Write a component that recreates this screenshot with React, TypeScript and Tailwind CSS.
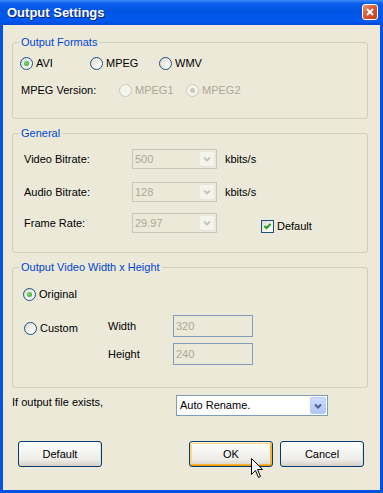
import React from "react";

function Radio({ checked, disabled, label }: { checked?: boolean; disabled?: boolean; label: string }) {
  return (
    <div className="flex items-center gap-[3px]">
      <span
        className={`flex h-[13px] w-[13px] items-center justify-center rounded-full border ${
          disabled
            ? "border-[#CAC8BB] bg-[#F5F4EA]"
            : "border-[#1C5180] bg-[linear-gradient(135deg,#DCD9CD_0%,#F4F3EE_60%,#FFFFFF_100%)]"
        }`}
      >
        {checked && (
          <span
            className={`h-[5px] w-[5px] rounded-full ${
              disabled ? "bg-[#CAC8BB]" : "bg-[radial-gradient(circle_at_40%_40%,#7EDC7E,#21A121)]"
            }`}
          />
        )}
      </span>
      <span className={disabled ? "text-[#ACA899]" : "text-black"}>{label}</span>
    </div>
  );
}

function Arrow({ color }: { color: string }) {
  return (
    <svg width="8" height="6" viewBox="0 0 8 6">
      <path d="M1 1.5 L4 4.5 L7 1.5" fill="none" stroke={color} strokeWidth="2" />
    </svg>
  );
}

// disabled combo box used in the General group
function DisabledCombo({ value }: { value: string }) {
  return (
    <div className="flex h-[20px] w-[85px] items-center border border-[#C9C7BA] bg-[#ECE9D8]">
      <span className="flex-1 pl-[2px] text-[#ACA899]">{value}</span>
      <span className="mr-[1px] flex h-[16px] w-[16px] items-center justify-center rounded-[2px] border border-[#E8E6DD] bg-[#F4F3EE]">
        <Arrow color="#C9C7BA" />
      </span>
    </div>
  );
}

function Group({ title, className, children }: { title: string; className: string; children: React.ReactNode }) {
  return (
    <div className={`ml-[9px] mr-[12px] rounded-[3px] border border-[#D0D0BF] ${className}`}>
      <div className="-mt-[8px] ml-[6px] w-fit bg-[#ECE9D8] px-[2px] leading-[14px] text-[#0046D5]">{title}</div>
      {children}
    </div>
  );
}

function XpButton({ label, focused }: { label: string; focused?: boolean }) {
  return (
    <button
      type="button"
      className={`flex h-[26px] w-[84px] items-center justify-center rounded-[3px] border border-[#003C74] bg-[linear-gradient(180deg,#FFFFFF_0%,#F6F6F3_35%,#ECEBE6_75%,#D6D0C5_100%)] text-black ${
        focused
          ? "shadow-[inset_0_1px_0_#FFF0CF,inset_0_-1px_0_#E59700,inset_1px_0_0_#FBD88C,inset_-1px_0_0_#F8B330,inset_0_2px_0_#F9D68C,inset_0_-2px_0_#F8B330,inset_2px_0_0_#FBD88C,inset_-2px_0_0_#F8B330]"
          : "shadow-[inset_0_-1px_0_#D6D0C5,inset_-1px_0_0_#E3E0D8]"
      }`}
    >
      {label}
    </button>
  );
}

export default function App() {
  return (
    <div className="relative flex h-[493px] w-[383px] flex-col overflow-hidden bg-[#0553E2] font-['Liberation_Sans',Arial,sans-serif] text-[11px] leading-[13px] text-black">
      {/* TITLE BAR */}
      <div className="flex h-[25px] items-center justify-between bg-[linear-gradient(180deg,#3D8DFB_0%,#0A5EEA_14%,#0055E5_45%,#0158EE_85%,#0149D8_100%)] pl-[7px] pr-[5px]">
        <span className="pb-[1px] text-[13px] font-bold text-white [text-shadow:1px_1px_0_#0A1E80]">Output Settings</span>
        <span className="mb-[2px] flex h-[16px] w-[16px] items-center justify-center rounded-[3px] border border-white bg-[linear-gradient(135deg,#EB9A7E_0%,#D85A36_45%,#C2401C_100%)]">
          <svg width="8" height="8" viewBox="0 0 8 8">
            <path d="M1 1 L7 7 M7 1 L1 7" stroke="white" strokeWidth="2" />
          </svg>
        </span>
      </div>

      {/* BODY */}
      <div className="mx-[3px] mb-[3px] flex flex-1 flex-col bg-[#ECE9D8]">
        {/* OUTPUT FORMATS */}
        <Group title="Output Formats" className="mt-[17px] h-[77px]">
          <div className="mt-[8px] flex h-[13px] items-center pl-[7px]">
            <div className="w-[70px]">
              <Radio checked label="AVI" />
            </div>
            <div className="w-[69px]">
              <Radio label="MPEG" />
            </div>
            <Radio label="WMV" />
          </div>
          <div className="mt-[14px] flex h-[13px] items-center pl-[7px]">
            <div className="w-[99px] pl-[1px]">MPEG Version:</div>
            <div className="w-[67px]">
              <Radio disabled label="MPEG1" />
            </div>
            <Radio disabled checked label="MPEG2" />
          </div>
        </Group>

        {/* GENERAL */}
        <Group title="General" className="mt-[14px] h-[120px]">
          <div className="mt-[9px] flex h-[20px] items-center pl-[10px]">
            <div className="w-[109px] pl-[1px]">Video Bitrate:</div>
            <DisabledCombo value="500" />
            <span className="ml-[8px]">kbits/s</span>
          </div>
          <div className="mt-[13px] flex h-[20px] items-center pl-[10px]">
            <div className="w-[109px] pl-[1px]">Audio Bitrate:</div>
            <DisabledCombo value="128" />
            <span className="ml-[8px]">kbits/s</span>
          </div>
          <div className="mt-[11px] flex h-[20px] items-center pl-[10px]">
            <div className="w-[109px] pl-[1px]">Frame Rate:</div>
            <DisabledCombo value="29.97" />
            <div className="ml-[44px] mt-[7px] flex items-center gap-[3px]">
              <span className="flex h-[13px] w-[13px] items-center justify-center border border-[#1C5180] bg-[linear-gradient(135deg,#DCD9CD_0%,#F4F3EE_60%,#FFFFFF_100%)]">
                <svg width="7" height="7" viewBox="0 0 7 7">
                  <path d="M0.5 3 L2.5 5 L6.5 1" fill="none" stroke="#21A121" strokeWidth="2" />
                </svg>
              </span>
              <span>Default</span>
            </div>
          </div>
        </Group>

        {/* OUTPUT VIDEO SIZE */}
        <Group title="Output Video Width x Height" className="mt-[14px] h-[121px]">
          <div className="mt-[14px] flex h-[13px] items-center pl-[10px]">
            <Radio checked label="Original" />
          </div>
          <div className="mt-[14px] flex pl-[10px]">
            <div className="ml-[1px] mt-[7px] w-[83px]">
              <Radio label="Custom" />
            </div>
            <div className="flex flex-col gap-[6px]">
              <div className="flex h-[22px] items-center">
                <span className="w-[66px] pl-[1px]">Width</span>
                <div className="flex h-[22px] w-[80px] items-center border border-[#7F9DB9] bg-[#ECE9D8] pl-[2px] text-[#ACA899]">320</div>
              </div>
              <div className="flex h-[22px] items-center">
                <span className="w-[66px] pl-[1px]">Height</span>
                <div className="flex h-[22px] w-[80px] items-center border border-[#7F9DB9] bg-[#ECE9D8] pl-[2px] text-[#ACA899]">240</div>
              </div>
            </div>
          </div>
        </Group>

        {/* IF FILE EXISTS */}
        <div className="mt-[7px] flex h-[21px] items-start pl-[9px]">
          <span className="mt-[1px] w-[164px]">If output file exists,</span>
          <div className="flex h-[21px] w-[152px] items-center border border-[#7F9DB9] bg-white">
            <span className="flex-1 pl-[3px]">Auto Rename.</span>
            <span className="mr-[1px] flex h-[17px] w-[16px] items-center justify-center rounded-[2px] border border-[#B9CDF8] bg-[linear-gradient(180deg,#D0DEFC_0%,#BCD0FA_50%,#AFC6F8_100%)]">
              <Arrow color="#4D6185" />
            </span>
          </div>
        </div>

        {/* BUTTONS */}
        <div className="mt-[25px] flex pl-[15px]">
          <XpButton label="Default" />
          <div className="ml-[87px] flex gap-[7px]">
            <XpButton label="OK" focused />
            <XpButton label="Cancel" />
          </div>
        </div>
      </div>

      {/* mouse cursor over the OK button */}
      <svg className="absolute left-[251px] top-[458px]" width="13" height="21" viewBox="0 0 13 21">
        <path d="M0.5 0.5 L0.5 16.5 L4.5 12.5 L7.5 19.5 L9.5 18.5 L6.5 11.5 L11.5 11.5 Z" fill="white" stroke="black" strokeWidth="1" />
      </svg>
    </div>
  );
}
